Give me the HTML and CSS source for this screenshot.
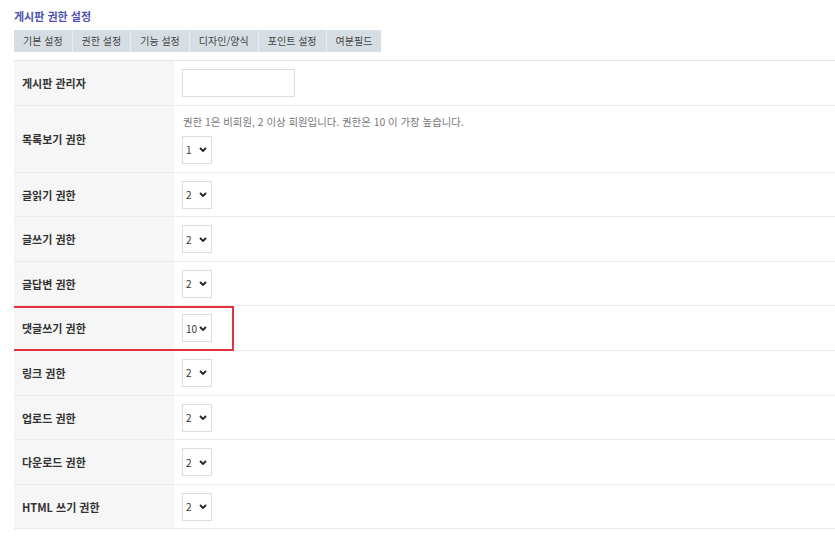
FILE: index.html
```html
<!DOCTYPE html>
<html lang="ko">
<head>
    <meta charset="UTF-8">
    <meta name="viewport" content="width=device-width, initial-scale=1.0">
    <title>게시판 권한 설정</title>
    <link rel="stylesheet" href="styles.css">
</head>
<body>
    <h2 class="page-title">게시판 권한 설정</h2>
    <ul class="tabs">
        <li>기본 설정</li>
        <li>권한 설정</li>
        <li>기능 설정</li>
        <li>디자인/양식</li>
        <li>포인트 설정</li>
        <li>여분필드</li>
    </ul>
    <div class="table-wrap">
        <table class="form-table">
            <tr>
                <th>게시판 관리자</th>
                <td><input type="text" class="admin-input"></td>
            </tr>
            <tr>
                <th>목록보기 권한</th>
                <td>
                    <p class="help">권한 1은 비회원, 2 이상 회원입니다. 권한은 10 이 가장 높습니다.</p>
                    <div class="level"><span>1</span><svg viewBox="0 0 8 5"><path d="M1 1 L4 4 L7 1"/></svg></div>
                </td>
            </tr>
            <tr>
                <th>글읽기 권한</th>
                <td><div class="level"><span>2</span><svg viewBox="0 0 8 5"><path d="M1 1 L4 4 L7 1"/></svg></div></td>
            </tr>
            <tr>
                <th>글쓰기 권한</th>
                <td><div class="level"><span>2</span><svg viewBox="0 0 8 5"><path d="M1 1 L4 4 L7 1"/></svg></div></td>
            </tr>
            <tr>
                <th>글답변 권한</th>
                <td><div class="level"><span>2</span><svg viewBox="0 0 8 5"><path d="M1 1 L4 4 L7 1"/></svg></div></td>
            </tr>
            <tr>
                <th>댓글쓰기 권한</th>
                <td><div class="level"><span>10</span><svg viewBox="0 0 8 5"><path d="M1 1 L4 4 L7 1"/></svg></div></td>
            </tr>
            <tr>
                <th>링크 권한</th>
                <td><div class="level"><span>2</span><svg viewBox="0 0 8 5"><path d="M1 1 L4 4 L7 1"/></svg></div></td>
            </tr>
            <tr>
                <th>업로드 권한</th>
                <td><div class="level"><span>2</span><svg viewBox="0 0 8 5"><path d="M1 1 L4 4 L7 1"/></svg></div></td>
            </tr>
            <tr>
                <th>다운로드 권한</th>
                <td><div class="level"><span>2</span><svg viewBox="0 0 8 5"><path d="M1 1 L4 4 L7 1"/></svg></div></td>
            </tr>
            <tr>
                <th>HTML 쓰기 권한</th>
                <td><div class="level"><span>2</span><svg viewBox="0 0 8 5"><path d="M1 1 L4 4 L7 1"/></svg></div></td>
            </tr>
        </table>
        <div class="mark"></div>
    </div>
</body>
</html>
```

FILE: styles.css
```css
body {
    font-family: "Noto Sans CJK KR", "Noto Sans", sans-serif;
    margin: 0 0 0 14px;
    padding: 0;
    background-color: #fff;
    color: #333;
}

.page-title {
    margin: 0;
    padding-top: 8px;
    height: 22px;
    font-size: 11px;
    font-weight: bold;
    line-height: 17px;
    color: #4d52ad;
}

.tabs {
    display: flex;
    list-style: none;
    margin: 0;
    padding: 0;
    width: fit-content;
    background-color: #d7dee3;
}

.tabs li {
    height: 22px;
    line-height: 22px;
    padding: 0 9px;
    font-size: 10px;
    color: #444;
    border-left: 1px solid #eaeef1;
}

.tabs li:first-child {
    border-left: none;
}

.table-wrap {
    position: relative;
    margin-top: 8px;
}

.form-table {
    width: 100%;
    border-collapse: collapse;
    border-top: 1px solid #e6e6e6;
}

.form-table th,
.form-table td {
    border-bottom: 1px solid #ebebeb;
    padding: 8px 8px 7.6px;
    vertical-align: middle;
    text-align: left;
}

.form-table th {
    width: 144px;
    background-color: #f6f6f6;
    font-size: 11px;
    font-weight: bold;
    color: #333;
}

.admin-input {
    display: block;
    width: 113px;
    height: 28px;
    box-sizing: border-box;
    border: 1px solid #ddd;
    margin: 0;
}

.help {
    margin: 0 0 6.4px 1px;
    font-size: 10.4px;
    line-height: 16px;
    color: #777;
}

.level {
    display: flex;
    align-items: center;
    justify-content: space-between;
    width: 30px;
    height: 28px;
    box-sizing: border-box;
    padding: 0 4px 0 3px;
    border: 1px solid #ddd;
    background-color: #fff;
    font-size: 10px;
    color: #333;
}

.level svg {
    width: 8px;
    height: 5px;
    fill: none;
    stroke: #222;
    stroke-width: 1.8;
}

/* annotation box over the comment permission row */
.mark {
    position: absolute;
    left: -4px;
    top: 246px;
    width: 224px;
    height: 45px;
    box-sizing: border-box;
    border: 2px solid #e3323b;
}
```
